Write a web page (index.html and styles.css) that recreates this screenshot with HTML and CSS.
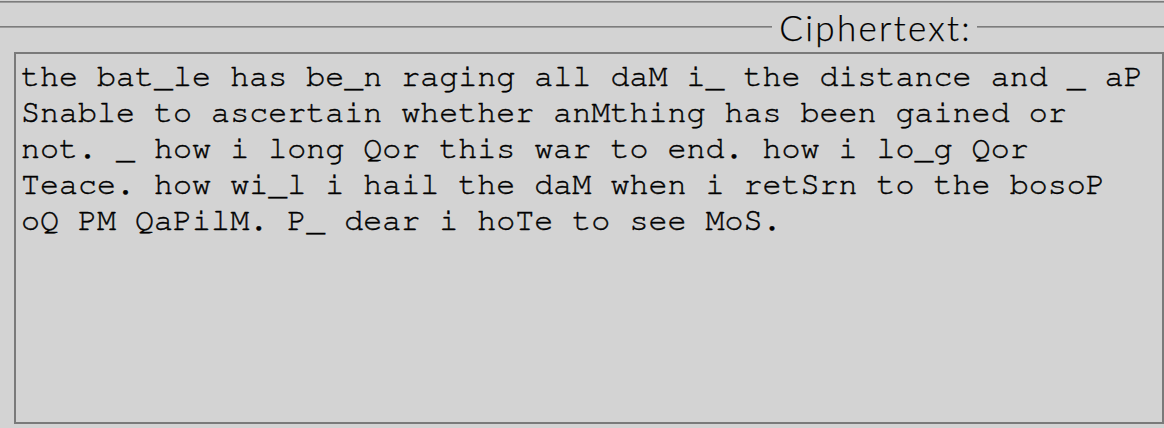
FILE: index.html
```html
<!DOCTYPE html>
<html>
<head>
<meta charset="utf-8">
<link rel="stylesheet" href="styles.css">
</head>
<body>
<div class="top-rule"></div>
<section class="panel">
  <div class="legend-row">
    <div class="rule rule-left"></div>
    <div class="legend">Ciphertext:</div>
    <div class="rule rule-right"></div>
  </div>
  <textarea class="cipher" spellcheck="false">the bat_le has be_n raging all daM i_ the distance and _ aP Snable to ascertain whether anMthing has been gained or not. _ how i long Qor this war to end. how i lo_g Qor Teace. how wi_l i hail the daM when i retSrn to the bosoP oQ PM QaPilM. P_ dear i hoTe to see MoS.</textarea>
</section>
</body>
</html>
```
FILE: styles.css
```css
html, body {
  margin: 0;
  padding: 0;
  background: #d3d3d3;
  overflow: hidden;
}
body {
  width: 1164px;
  height: 428px;
}
.top-rule {
  margin-top: 1px;
  height: 0;
  border-top: 1px solid #7c7c7c;
  border-bottom: 1px solid #9c9c9c;
}
.panel {
  display: flex;
  flex-direction: column;
}
.legend-row {
  display: flex;
  align-items: center;
  height: 48px;
}
.rule {
  height: 0;
  border-top: 1px solid #7c7c7c;
  border-bottom: 1px solid #9c9c9c;
}
.rule-left {
  flex: 1;
}
.rule-right {
  width: 187px;
}
.legend {
  font-family: Lato, "Noto Sans", sans-serif;
  font-weight: 300;
  font-size: 35px;
  letter-spacing: 2.3px;
  color: #000;
  -webkit-text-stroke: 0.25px #000;
  padding: 0 5px 0 7px;
  line-height: 40px;
}
.cipher {
  margin: 1px 0 0 14px;
  width: 1150px;
  height: 372px;
  box-sizing: border-box;
  background: #d3d3d3;
  border: 2px solid #7a7a7a;
  padding: 5px 12px 2px 5px;
  font-family: "Nimbus Mono PS", "Nimbus Mono L", FreeMono, "Courier 10 Pitch", Courier, "Liberation Mono", monospace;
  font-size: 31.7px;
  line-height: 36px;
  color: #000;
  -webkit-text-stroke: 0.4px #000;
  resize: none;
  overflow: hidden;
  outline: none;
}
```
